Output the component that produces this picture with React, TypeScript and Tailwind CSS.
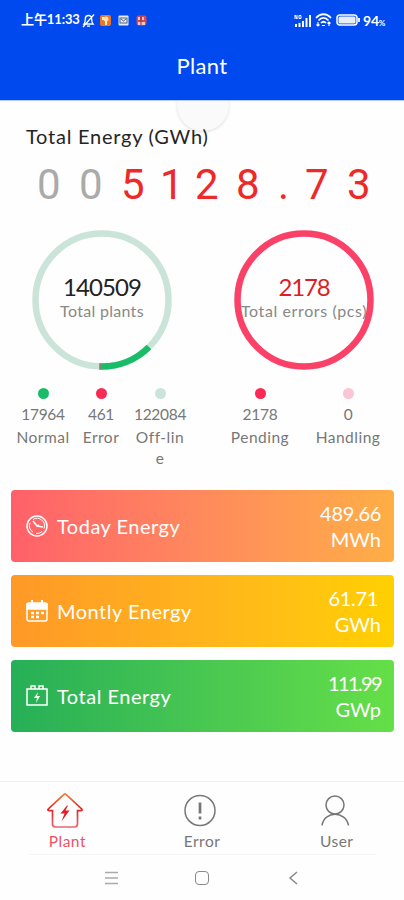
import type { ReactNode } from "react";
import clsx from "clsx";

const readout = [
  { char: "0", cell: "w-[42px]", muted: true },
  { char: "0", cell: "w-[42px]", muted: true },
  { char: "5", cell: "w-[39px]" },
  { char: "1", cell: "w-[35px]" },
  { char: "2", cell: "w-[41px]" },
  { char: "8", cell: "w-[42px]" },
  { char: ".", cell: "w-[27px]" },
  { char: "7", cell: "w-[42px]" },
  { char: "3", cell: "w-[42px]" },
];

function StatusBar() {
  return (
    <div className="flex h-10 items-center justify-between pl-[21px] pr-[19px] text-white">
      <div className="flex items-center">
        <span className="w-[59px] whitespace-nowrap font-['Lato','Noto_Sans_CJK_SC',sans-serif] text-[13px] font-bold tracking-[-0.1px]">
          上午11:33
        </span>
        <svg className="ml-px h-[15px] w-[15px]" viewBox="0 0 15 15" fill="none" stroke="currentColor" strokeWidth="1.3">
          <path d="M3 11h9c-1-1-1.3-2-1.3-5 0-2-1.3-3.5-3.2-3.5S4.3 4 4.3 6C4.300 9 4 10 3 11ZM6 13.200h3M2 14 13 1.500" />
        </svg>
        <svg className="ml-[4px] h-[11px] w-[11px]" viewBox="0 0 11 11">
          <rect width="11" height="11" rx="2" fill="#ef742e" />
          <circle cx="6" cy="4" r="2.500" fill="#ffe2a6" />
          <path d="M2 2h2v3H2zM5 6h2v4H5z" fill="#fff0ce" />
        </svg>
        <svg className="ml-[7px] h-[11px] w-[11px]" viewBox="0 0 11 11" fill="none">
          <rect x=".5" y=".5" width="10" height="10" rx="1" fill="#e5ebf5" />
          <rect x="2" y="3" width="7" height="5" stroke="#53647b" />
          <path d="m3 4 2.500 2L8 4" stroke="#53647b" />
        </svg>
        <svg className="ml-[7px] h-[11px] w-[11px]" viewBox="0 0 11 11">
          <rect x=".5" y=".5" width="10" height="10" rx="2" fill="#d84952" />
          <path d="M2 2h2v3H2zM6 2h2v3H6zM2 7h7v3H2z" fill="#f6c3b7" />
          <path d="M5 1v9" stroke="#7d3564" />
        </svg>
      </div>
      <div className="flex items-center">
        <svg className="h-[13px] w-[18px]" viewBox="0 0 18 13" fill="none" stroke="currentColor">
          <path d="M1 5V1l2 4V1M5 1.500h2v3H5z" />
          <path d="M2 13v-3M5.500 13V9M9 13V7M12.500 13V4M16 13V1" strokeWidth="2" />
        </svg>
        <svg className="ml-[3px] h-[14px] w-[17px]" viewBox="0 0 17 14" fill="none" stroke="currentColor" strokeWidth="1.800">
          <path d="M1 5c4.500-5 10.500-5 15 0M3.500 7.500c3-3.500 7-3.500 10 0M6 10c1.600-1.700 3.400-1.700 5 0" />
          <path d="M3 9v4M1.500 11.500 3 13l1.500-1.500M14 13V9M12.500 10.500 14 9l1.500 1.500M7 12.500h3" strokeWidth="1.200" />
        </svg>
        <svg className="ml-[4px] h-3 w-6" viewBox="0 0 24 12" fill="none">
          <rect x="1" y="1" width="20" height="10" rx="3" stroke="#fff" strokeWidth="1.500" />
          <rect x="2.500" y="2.500" width="17" height="7" rx="1.500" fill="#e8ecf5" />
          <path d="M23 4v4" stroke="#fff" strokeWidth="1.800" />
        </svg>
        <span className="ml-[3px] text-[14px] font-bold tracking-[-0.3px]">94<span className="text-[8px]">%</span></span>
      </div>
    </div>
  );
}

function Ring({ children, error }: { children: ReactNode; error?: boolean }) {
  return (
    <div className="relative flex h-[140px] w-[140px] items-center justify-center">
      <svg className="absolute inset-0 h-full w-full" viewBox="0 0 140 140" fill="none" strokeWidth="6.500">
        <circle cx="70" cy="70" r="66.500" stroke={error ? "#fb4168" : "#cbe4d9"} />
        {!error && (
          <>
            <path d="M117 117A66.500 66.500 0 0 1 68 136.500" stroke="#17bd69" />
            <path d="M68.500 136.500h-1.300" stroke="#ff4b6b" />
          </>
        )}
      </svg>
      <div className="relative flex flex-col items-center whitespace-nowrap pb-[6px]">{children}</div>
    </div>
  );
}

function Legend({ dot, value, label, width }: { dot: string; value: string; label: string; width: string }) {
  return (
    <div className={clsx("flex flex-col items-center text-center text-[15.500px] leading-[21px] text-[#777]", width)}>
      <span className={clsx("mb-[5px] h-[11px] w-[11px] rounded-full", dot)} />
      <span className="tracking-[-0.3px]">{value}</span>
      <span className="mt-[2px] w-full break-all tracking-[0.5px]">{label}</span>
    </div>
  );
}

function EnergyCard({ icon, title, value, unit, color }: { icon: ReactNode; title: string; value: ReactNode; unit: string; color: string }) {
  return (
    <div className={clsx("flex h-[72px] items-center justify-between rounded-[4px] bg-linear-to-r pl-[14px] pr-[13px] text-white", color)}>
      <div className="flex items-center gap-[8px]">
        <svg className="h-6 w-6" viewBox="0 0 24 24" fill="none" stroke="currentColor" strokeWidth="1.500">{icon}</svg>
        <span className="text-[20px] leading-7 tracking-[0.5px]">{title}</span>
      </div>
      <div className="text-right text-[20px] leading-[26px]">
        <div className="tracking-[-0.3px]">{value}</div>
        <div>{unit}</div>
      </div>
    </div>
  );
}

function NavItem({ label, children, active }: { label: string; children: ReactNode; active?: boolean }) {
  return (
    <div className={clsx("flex flex-1 flex-col items-center", active ? "text-[#ef5265]" : "text-[#777]")}>
      <svg className="h-10 w-10" viewBox="0 0 40 40" fill="none" stroke="currentColor" strokeWidth="1.500">{children}</svg>
      <span className="text-[15.500px] leading-5 tracking-[0.5px]">{label}</span>
    </div>
  );
}

export default function App() {
  return (
    <div className="relative flex h-[900px] w-[404px] flex-col overflow-hidden bg-[#fefefe] font-['Lato',sans-serif]">
      {/* Pull-to-refresh bubble, tucked under the header */}
      <div className="absolute left-[177px] top-[79px] h-[52px] w-[52px] rounded-full bg-[#fafafa] shadow-[0_1px_3px_#ddd]" />
      <header className="relative h-[101px] border-b border-[#b5caff] bg-[#0049ee] text-white">
        <StatusBar />
        <h1 className="pt-[12px] text-center text-[22px] leading-[28px] tracking-[0.3px]">Plant</h1>
      </header>

      <section className="relative">
        <h2 className="pl-[26px] pt-[21px] text-[20px] leading-7 tracking-[0.75px] text-[#252525]">Total Energy (GWh)</h2>
        <div className="mt-[13px] flex h-11 pl-[37px] font-['Roboto',sans-serif] text-[42px] leading-[44px]">
          {readout.map((item, i) => (
            <span key={i} className={clsx("shrink-0", item.cell, item.muted ? "text-[#aaa]" : "text-[#ed2929]")}>
              {item.char}
            </span>
          ))}
        </div>
      </section>

      <section className="mt-[23px] flex justify-between pl-[32px] pr-[30px]">
        <Ring>
          <span className="text-[24px] leading-7 tracking-[-0.9px] text-[#222]">140509</span>
          <span className="text-[16px] leading-5 tracking-[0.3px] text-[#888]">Total plants</span>
        </Ring>
        <Ring error>
          <span className="text-[24px] leading-7 tracking-[-1.2px] text-[#db1f25]">2178</span>
          <span className="text-[16px] leading-5 tracking-[0.6px] text-[#888]">Total errors (pcs)</span>
        </Ring>
      </section>

      <section className="mt-[18px] flex h-[102px]">
        <div className="flex w-[202px] pl-[14px]">
          <Legend dot="bg-[#17bd69]" value="17964" label="Normal" width="w-[58px]" />
          <Legend dot="bg-[#fa2955]" value="461" label="Error" width="w-[58px]" />
          <Legend dot="bg-[#cbe4d9]" value="122084" label="Off-line" width="w-[60px] px-[4px]" />
        </div>
        <div className="flex pl-[14px]">
          <Legend dot="bg-[#fa2955]" value="2178" label="Pending" width="w-[88px]" />
          <Legend dot="bg-[#fac6d4]" value="0" label="Handling" width="w-[88px]" />
        </div>
      </section>

      <section className="flex flex-col gap-[13px] pl-[11px] pr-[10px]">
        <EnergyCard
          title="Today Energy"
          value="489.66"
          unit="MWh"
          color="from-[#ff606a] to-[#ffae45]"
          icon={
            <>
              <circle cx="12" cy="12" r="10" />
              <path d="M5 9a7.500 7.500 0 0 0 3 9M8 5.500a7.500 7.500 0 0 1 11 9M11 19.500a7.500 7.500 0 0 0 6-2" strokeWidth="1" />
              <path d="m8 7 4 5 6 1M12 12l2-1" />
            </>
          }
        />
        <EnergyCard
          title="Montly Energy"
          value={<span className="pr-[3px]">61.71</span>}
          unit="GWh"
          color="from-[#ff9827] to-[#ffd000]"
          icon={
            <>
              <rect x="2" y="4" width="20" height="18" rx="2" />
              <path d="M2 5h20v5H2z" fill="currentColor" />
              <path d="M7 1v5M17 1v5" strokeWidth="2" />
              <path d="M6 14h3M11 14h3M16 14h3M6 18h3M11 18h3" strokeWidth="2.500" />
            </>
          }
        />
        <EnergyCard
          title="Total Energy"
          value={<span className="tracking-[-1.600px]">111.99</span>}
          unit="GWp"
          color="from-[#25af57] to-[#65df47]"
          icon={
            <>
              <path d="M2 5h20v16H2zM6 5V2h4v3M14 5V2h4v3" />
              <path d="m13 8-4 6h3l-1 5 4-7h-3z" fill="currentColor" stroke="none" />
            </>
          }
        />
      </section>

      <footer className="mt-auto h-[119px] border-t border-[#f1f1f1]">
        <nav className="flex h-[72px] pt-[9px]">
          <NavItem label="Plant" active>
            <defs>
              <linearGradient id="house" x1="0" y1="0" x2="0" y2="1">
                <stop stopColor="#f08235" />
                <stop offset=".45" stopColor="#df2527" />
                <stop offset="1" stopColor="#ec6670" />
              </linearGradient>
            </defs>
            <path d="M17 3.300 1.300 18Q.3 19.700 2 19.700h3.500V33q0 3 3 3h19q3 0 3-3V19.700H34q1.700 0 .7-1.700L19 3.300q-1-.8-2 0Z" strokeWidth="1.700" stroke="url(#house)" />
            <path d="m20 14.500-6.500 8h4l-3 8 8-11h-4l2.500-5Z" fill="#df2028" stroke="none" />
          </NavItem>
          <NavItem label="Error">
            <circle cx="18" cy="19.500" r="15" />
            <path d="M18 11.500v11M18 25.500v3" strokeWidth="2.700" />
          </NavItem>
          <NavItem label="User">
            <circle cx="18" cy="14" r="9" />
            <path d="M5 34.500c2-15 24-15 26.500 0" />
          </NavItem>
        </nav>
        <div className="mx-[28px] flex h-[46px] items-center border-t border-[#f5f5f5] pl-[76px] text-[#aaa]">
          <svg className="h-4 w-4" viewBox="0 0 16 16" stroke="currentColor" strokeWidth="1.700">
            <path d="M1 2.500h13M1 8h13M1 13.500h13" />
          </svg>
          <span className="ml-[75px] h-[14px] w-[14px] rounded-[4px] border-[1.500px] border-[#888]" />
          <svg className="ml-[77px] h-4 w-4" viewBox="0 0 16 16" fill="none" stroke="#888" strokeWidth="1.500">
            <path d="M11 2 4 8l7 6" />
          </svg>
        </div>
      </footer>
    </div>
  );
}
